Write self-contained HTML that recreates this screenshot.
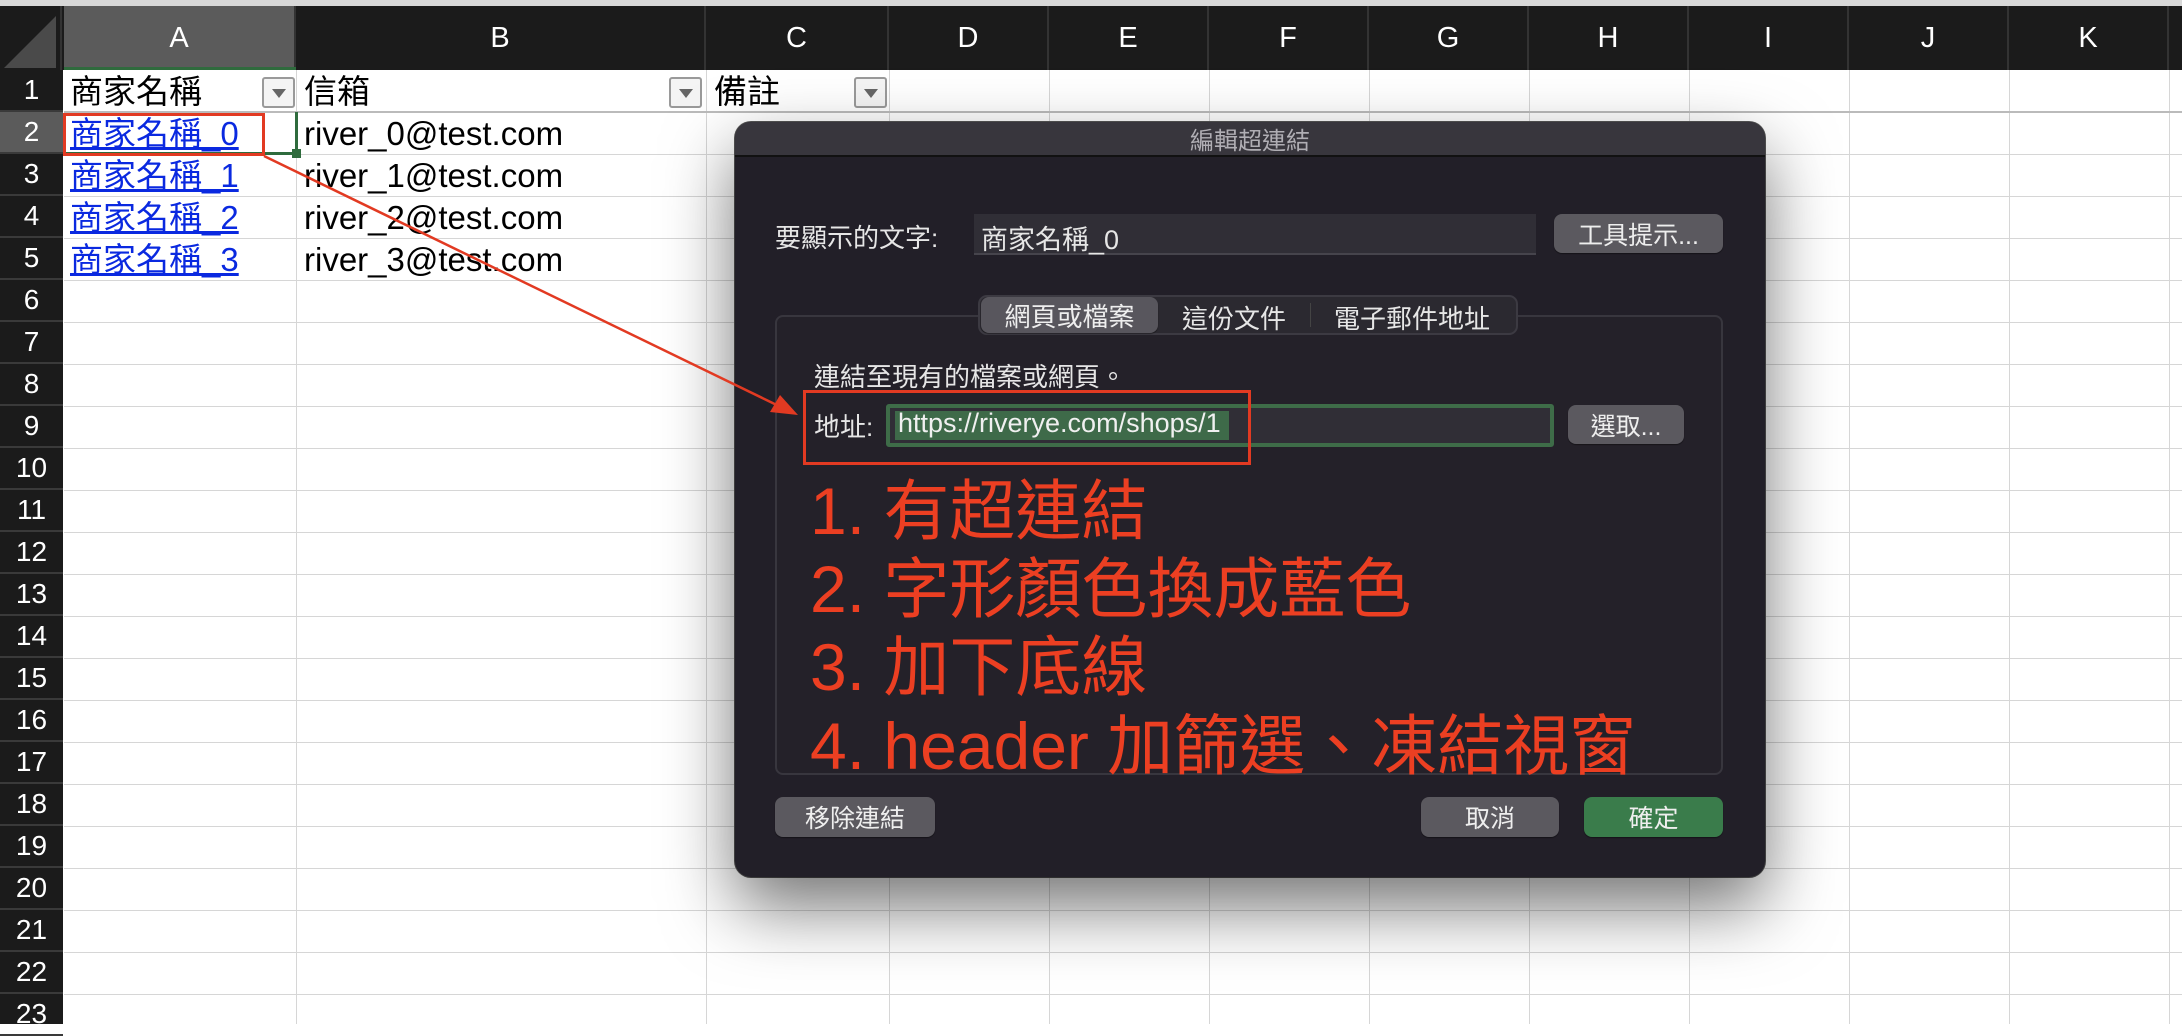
<!DOCTYPE html>
<html><head><meta charset="utf-8"><style>
*{margin:0;padding:0;box-sizing:border-box}
body{width:2182px;height:1024px;overflow:hidden;background:#fff;position:relative;font-family:"Liberation Sans","Noto Sans CJK TC",sans-serif}
.a{position:absolute}
.vl{position:absolute;top:70px;bottom:0;width:1px;background:#d6d6d6}
.hl{position:absolute;left:64px;right:0;height:1px;background:#d6d6d6}
.ch{position:absolute;top:6px;height:64px;color:#fff;font-size:29px;display:flex;align-items:center;justify-content:center;border-right:2px solid #333}
.rh{position:absolute;left:0;width:63px;height:42px;color:#fff;font-size:28px;display:flex;align-items:center;justify-content:center;border-bottom:2px solid #3a3a3a}
.cell{position:absolute;font-size:33px;line-height:42px;height:42px;color:#000;white-space:nowrap}
.lnk{color:#0a29e0;text-decoration:underline}
.flt{position:absolute;width:33px;height:31px;border:2px solid #9a9a9a;background:#f4f4f4;border-radius:3px}
.flt:after{content:"";position:absolute;left:8px;top:10px;border-left:7px solid transparent;border-right:7px solid transparent;border-top:9px solid #666}
.btn{position:absolute;background:#5b595f;border-radius:8px;color:#eee;font-size:25px;display:flex;align-items:center;justify-content:center;box-shadow:0 1px 1px rgba(0,0,0,.4)}
.lbl{position:absolute;color:#e6e6e6;font-size:26px;white-space:nowrap}
.red{position:absolute;left:810px;color:#ec3f22;font-size:66px;white-space:nowrap;line-height:78px}
</style></head><body>
<div class="a" style="left:0;top:0;width:2182px;height:6px;background:#d8d8d8"></div>
<div class="a" style="left:0;top:6px;width:2182px;height:64px;background:#1b1b1b"></div>
<div class="a" style="left:0;top:70px;width:63px;height:954px;background:#1b1b1b"></div>
<div class="a" style="left:0;top:6px;width:62px;height:64px;border-right:2px solid #333"><svg width="60" height="64"><polygon points="56,10 56,62 4,62" fill="#4a4a4a"/></svg></div>
<div class="ch" style="left:64px;width:232px;background:#5b5b5b">A</div>
<div class="ch" style="left:296px;width:410px">B</div>
<div class="ch" style="left:706px;width:183px">C</div>
<div class="ch" style="left:889px;width:160px">D</div>
<div class="ch" style="left:1049px;width:160px">E</div>
<div class="ch" style="left:1209px;width:160px">F</div>
<div class="ch" style="left:1369px;width:160px">G</div>
<div class="ch" style="left:1529px;width:160px">H</div>
<div class="ch" style="left:1689px;width:160px">I</div>
<div class="ch" style="left:1849px;width:160px">J</div>
<div class="ch" style="left:2009px;width:160px">K</div>
<div class="a" style="left:64px;top:67px;width:232px;height:3px;background:#2f6b3d"></div>

<div class="rh" style="top:70px">1</div><div class="rh" style="top:112px;background:#5b5b5b">2</div><div class="rh" style="top:154px">3</div><div class="rh" style="top:196px">4</div><div class="rh" style="top:238px">5</div><div class="rh" style="top:280px">6</div><div class="rh" style="top:322px">7</div><div class="rh" style="top:364px">8</div><div class="rh" style="top:406px">9</div><div class="rh" style="top:448px">10</div><div class="rh" style="top:490px">11</div><div class="rh" style="top:532px">12</div><div class="rh" style="top:574px">13</div><div class="rh" style="top:616px">14</div><div class="rh" style="top:658px">15</div><div class="rh" style="top:700px">16</div><div class="rh" style="top:742px">17</div><div class="rh" style="top:784px">18</div><div class="rh" style="top:826px">19</div><div class="rh" style="top:868px">20</div><div class="rh" style="top:910px">21</div><div class="rh" style="top:952px">22</div><div class="rh" style="top:994px">23</div>

<div class="vl" style="left:296px"></div><div class="vl" style="left:706px"></div><div class="vl" style="left:889px"></div><div class="vl" style="left:1049px"></div><div class="vl" style="left:1209px"></div><div class="vl" style="left:1369px"></div><div class="vl" style="left:1529px"></div><div class="vl" style="left:1689px"></div><div class="vl" style="left:1849px"></div><div class="vl" style="left:2009px"></div><div class="vl" style="left:2169px"></div>
<div class="hl" style="top:111px;height:2px;background:#bbb"></div><div class="hl" style="top:154px"></div><div class="hl" style="top:196px"></div><div class="hl" style="top:238px"></div><div class="hl" style="top:280px"></div><div class="hl" style="top:322px"></div><div class="hl" style="top:364px"></div><div class="hl" style="top:406px"></div><div class="hl" style="top:448px"></div><div class="hl" style="top:490px"></div><div class="hl" style="top:532px"></div><div class="hl" style="top:574px"></div><div class="hl" style="top:616px"></div><div class="hl" style="top:658px"></div><div class="hl" style="top:700px"></div><div class="hl" style="top:742px"></div><div class="hl" style="top:784px"></div><div class="hl" style="top:826px"></div><div class="hl" style="top:868px"></div><div class="hl" style="top:910px"></div><div class="hl" style="top:952px"></div><div class="hl" style="top:994px"></div>

<div class="cell" style="left:70px;top:71px">商家名稱</div>
<div class="cell" style="left:304px;top:71px">信箱</div>
<div class="cell" style="left:714px;top:71px">備註</div>
<div class="flt" style="left:262px;top:77px"></div>
<div class="flt" style="left:669px;top:77px"></div>
<div class="flt" style="left:854px;top:77px"></div>
<div class="cell lnk" style="left:70px;top:113px">商家名稱_0</div>
<div class="cell lnk" style="left:70px;top:155px">商家名稱_1</div>
<div class="cell lnk" style="left:70px;top:197px">商家名稱_2</div>
<div class="cell lnk" style="left:70px;top:239px">商家名稱_3</div>
<div class="cell" style="left:304px;top:113px">river_0@test.com</div>
<div class="cell" style="left:304px;top:155px">river_1@test.com</div>
<div class="cell" style="left:304px;top:197px">river_2@test.com</div>
<div class="cell" style="left:304px;top:239px">river_3@test.com</div>
<div class="a" style="left:295px;top:112px;width:3px;height:42px;background:#2f6b3d"></div>
<div class="a" style="left:64px;top:152px;width:232px;height:3px;background:#2f6b3d"></div>
<div class="a" style="left:292px;top:149px;width:9px;height:9px;background:#2f6b3d"></div>
<div class="a" style="left:63px;top:113px;width:202px;height:43px;border:3px solid #e23a22"></div>

<!-- dialog -->
<div class="a" style="left:735px;top:122px;width:1030px;height:755px;border-radius:16px;background:#221f28;box-shadow:0 30px 70px rgba(0,0,0,.55),0 0 0 1px #555;overflow:hidden">
  <div class="a" style="left:0;top:0;width:1030px;height:35px;background:#38363d;border-bottom:2px solid #111;color:#b0aeb4;font-size:24px;display:flex;align-items:center;justify-content:center">編輯超連結</div>
</div>
<div class="lbl" style="left:775px;top:218px">要顯示的文字:</div>
<div class="a" style="left:974px;top:214px;width:562px;height:41px;background:#302e36;border-bottom:2px solid #46444c"></div>
<div class="lbl" style="left:981px;top:218px;font-size:27px">商家名稱_0</div>
<div class="btn" style="left:1554px;top:214px;width:169px;height:39px">工具提示...</div>
<div class="a" style="left:775px;top:315px;width:948px;height:460px;border:2px solid #38363e;border-radius:8px;background:#242129"></div>
<div class="a" style="left:978px;top:295px;width:540px;height:40px;background:#2b2930;border:2px solid #3c3a42;border-radius:9px"></div>
<div class="btn" style="left:981px;top:297px;width:177px;height:36px;background:#58565d;font-size:26px">網頁或檔案</div>
<div class="lbl" style="left:1182px;top:299px">這份文件</div>
<div class="a" style="left:1310px;top:303px;width:1px;height:24px;background:#444"></div>
<div class="lbl" style="left:1334px;top:299px">電子郵件地址</div>
<div class="lbl" style="left:814px;top:357px">連結至現有的檔案或網頁。</div>
<div class="lbl" style="left:814px;top:407px">地址:</div>
<div class="a" style="left:886px;top:404px;width:668px;height:43px;border:4px solid #3e6c48;border-radius:3px;background:#302e36"></div>
<div class="a" style="left:895px;top:411px;width:334px;height:29px;background:#3e6a49"></div>
<div class="lbl" style="left:898px;top:408px;font-size:27px;color:#f0f0f0">https://riverye.com/shops/1</div>
<div class="btn" style="left:1568px;top:405px;width:116px;height:39px">選取...</div>
<div class="a" style="left:803px;top:390px;width:448px;height:75px;border:3px solid #e23a22"></div>
<div class="red" style="top:472px">1. 有超連結</div>
<div class="red" style="top:550px">2. 字形顏色換成藍色</div>
<div class="red" style="top:628px">3. 加下底線</div>
<div class="red" style="top:707px">4. header 加篩選、凍結視窗</div>
<div class="btn" style="left:775px;top:797px;width:160px;height:40px">移除連結</div>
<div class="btn" style="left:1421px;top:797px;width:138px;height:40px">取消</div>
<div class="btn" style="left:1584px;top:797px;width:139px;height:40px;background:#3a7c4b">確定</div>

<svg class="a" style="left:0;top:0" width="2182" height="1024"><line x1="264" y1="156" x2="785" y2="409" stroke="#e23a22" stroke-width="2.5"/><polygon points="798,415 770,412 780,395" fill="#e23a22"/></svg>
</body></html>
